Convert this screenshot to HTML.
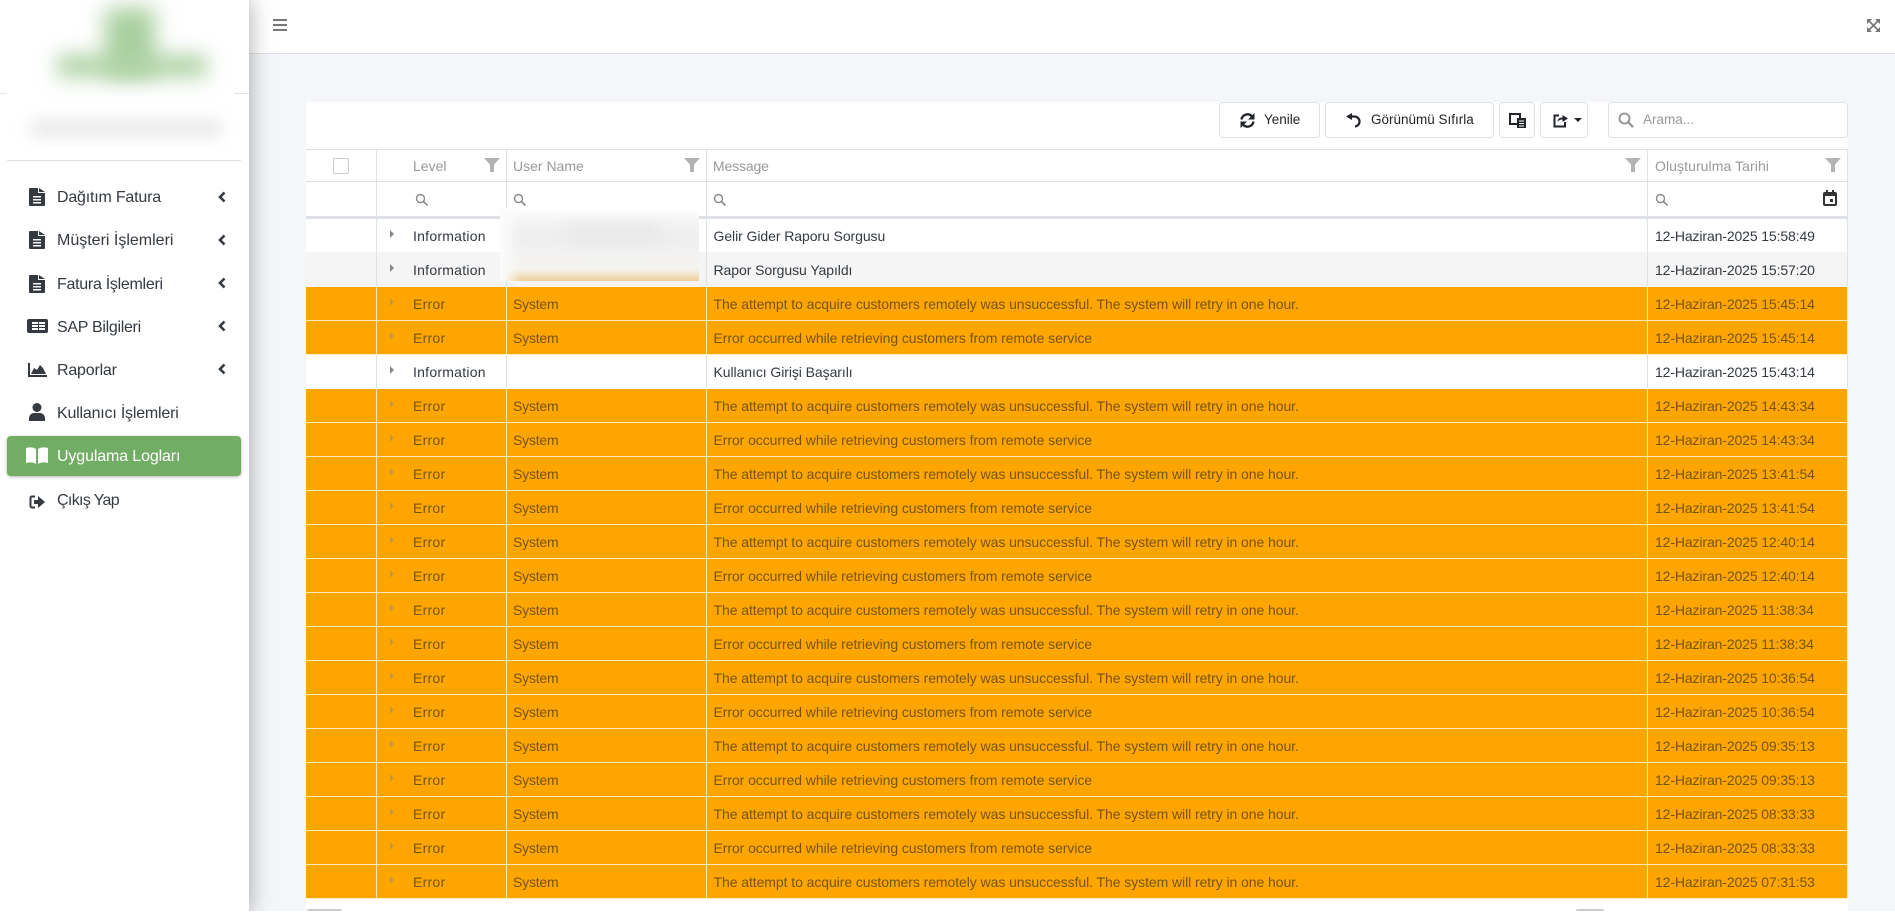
<!DOCTYPE html>
<html lang="tr"><head><meta charset="utf-8"><title>Uygulama Logları</title>
<style>
*{box-sizing:border-box}
html,body{margin:0;padding:0;width:1895px;height:913px;overflow:hidden;background:#fff;font-family:"Liberation Sans",sans-serif;font-size:14px;color:#333}
#bg{position:absolute;left:249px;top:53px;width:1646px;height:858px;background:#f4f6f9}
#top{position:absolute;left:249px;top:0;width:1646px;height:54px;background:#fff;border-bottom:1px solid #dee2e6}
#side{position:absolute;left:0;top:0;width:249px;height:913px;background:#fff;box-shadow:0 0 22px rgba(0,0,0,.35);overflow:hidden}
.m{position:absolute;left:57px;font-size:16px;letter-spacing:-.2px;line-height:22px;color:#343a40;white-space:nowrap}
.i{position:absolute;display:block}
.c{position:absolute;left:218px}
#act{position:absolute;left:7px;top:436px;width:234px;height:40px;background:#72ad65;border-radius:4px;box-shadow:0 1px 3px rgba(0,0,0,.3)}
#panel{position:absolute;left:306px;top:102px;width:1542px;height:809px;background:#fff}
.b{position:absolute;top:102px;height:36px;background:#fff;border:1px solid #dee2e6;border-radius:4px;line-height:34px;font-size:13.5px;color:#212529;white-space:nowrap}
#tbl{position:absolute;left:306px;top:149px;width:1542px}
.h,.f,.r{display:flex;width:1542px;height:34px;position:relative}
.h{height:33px;border-top:1px solid #dee2e6;border-bottom:1px solid #dee2e6;color:#999;line-height:33px;font-size:14px}
.f{height:37px;border-bottom:3px solid #dee2e6}
.r{border-bottom:1px solid #f5f5f5;line-height:34px;color:#343a40;font-size:14px}
.e{background:#ffa500;border-color:#ffe9bd;color:#76550f}
.g{background:#f5f5f5}
.h>div,.f>div,.r>div{border-right:1px solid #dee2e6;position:relative;white-space:nowrap;overflow:hidden;padding-left:6px}
.e>div{border-color:#ffe9bd}
.a{width:71px;padding:0!important}
.l{width:130px;padding-left:36px!important}
.u{width:200px}
.s{width:941px}
.d{width:200px}
.r .l{letter-spacing:.25px}
.r .u{letter-spacing:-.2px}
.r .s{letter-spacing:-.07px;padding-left:6.500px}
.r .d{letter-spacing:-.12px;padding-left:7px}
.h .d{padding-left:7px;letter-spacing:.08px}
.h .s{letter-spacing:-.15px}
.t{position:absolute;left:13px;top:11px;width:0;height:0;border-left:4px solid #888;border-top:4px solid transparent;border-bottom:4px solid transparent}
.e .t{border-left-color:#c5963c}
.fl{position:absolute;right:6px;top:8px}
.q{position:absolute;top:11px}
</style></head><body>
<div id="bg"></div>
<div id="top">
<svg class="i" style="left:24px;top:19px" width="15" height="13"><path d="M0 1h14M0 6h14M0 11h14" stroke="#777" stroke-width="2"/></svg>
<svg class="i" style="left:1617px;top:18px" width="15" height="15" viewBox="0 0 15 15"><path d="M1 1h5L1 6zM14 1v5L9 1zM1 14V9l5 5zM14 14H9l5-5z" fill="#777"/><path d="M3 3l9 9M12 3l-9 9" stroke="#777" stroke-width="1.6"/></svg>
</div>
<div id="side">
<div style="position:absolute;left:0;top:93px;width:249px;height:1px;background:#e4e4e4"></div>
<div style="position:absolute;left:7px;top:0;width:227px;height:146px;background:#fff;overflow:hidden">
<div style="position:absolute;left:98px;top:8px;width:50px;height:68px;background:#a9cf9e;filter:blur(11px)"></div>
<div style="position:absolute;left:50px;top:55px;width:150px;height:22px;background:#aed2a4;filter:blur(10px)"></div>
<div style="position:absolute;left:24px;top:121px;width:190px;height:15px;background:#e6e6e6;filter:blur(8px)"></div>
</div>
<div style="position:absolute;left:7px;top:160px;width:234px;height:1px;background:#dee2e6"></div>
<svg class="i" style="left:29px;top:188px" width="16" height="18" viewBox="0 0 16 18"><path d="M1 0h8v5h7v12a1 1 0 0 1-1 1H1a1 1 0 0 1-1-1V1a1 1 0 0 1 1-1zM10 0l6 4h-6zM4 8v1.500h8V8zM4 11v1.500h8V11zM4 14v1.500h8V14z" fill="#343a40" fill-rule="evenodd"/></svg>
<div class="m" style="top:187px">Dağıtım Fatura</div>
<svg class="c" style="top:191px" width="8" height="12"><path d="M6.500 1.500 2 6l4.500 4.500" fill="none" stroke="#343a40" stroke-width="2.600"/></svg>
<svg class="i" style="left:29px;top:231px" width="16" height="18" viewBox="0 0 16 18"><path d="M1 0h8v5h7v12a1 1 0 0 1-1 1H1a1 1 0 0 1-1-1V1a1 1 0 0 1 1-1zM10 0l6 4h-6zM4 8v1.500h8V8zM4 11v1.500h8V11zM4 14v1.500h8V14z" fill="#343a40" fill-rule="evenodd"/></svg>
<div class="m" style="top:230px;letter-spacing:0">Müşteri İşlemleri</div>
<svg class="c" style="top:234px" width="8" height="12"><path d="M6.500 1.500 2 6l4.500 4.500" fill="none" stroke="#343a40" stroke-width="2.600"/></svg>
<svg class="i" style="left:29px;top:275px" width="16" height="18" viewBox="0 0 16 18"><path d="M1 0h8v5h7v12a1 1 0 0 1-1 1H1a1 1 0 0 1-1-1V1a1 1 0 0 1 1-1zM10 0l6 4h-6zM4 8v1.500h8V8zM4 11v1.500h8V11zM4 14v1.500h8V14z" fill="#343a40" fill-rule="evenodd"/></svg>
<div class="m" style="top:274px;letter-spacing:-.28px">Fatura İşlemleri</div>
<svg class="c" style="top:277px" width="8" height="12"><path d="M6.500 1.500 2 6l4.500 4.500" fill="none" stroke="#343a40" stroke-width="2.600"/></svg>
<svg class="i" style="left:27px;top:319px" width="21" height="14" viewBox="0 0 21 14"><path d="M2 0h17a2 2 0 0 1 2 2v10a2 2 0 0 1-2 2H2a2 2 0 0 1-2-2V2a2 2 0 0 1 2-2zM5 3v2h6V3zM12 3v2h6V3zM5 6v2h6V6zM12 6v2h6V6zM5 9v2h6V9zM12 9v2h6V9z" fill="#343a40" fill-rule="evenodd"/></svg>
<div class="m" style="top:317px;letter-spacing:-.3px">SAP Bilgileri</div>
<svg class="c" style="top:320px" width="8" height="12"><path d="M6.500 1.500 2 6l4.500 4.500" fill="none" stroke="#343a40" stroke-width="2.600"/></svg>
<svg class="i" style="left:28px;top:363px" width="19" height="14" viewBox="0 0 19 14"><path d="M0 0h2v12h17v2H0zM3 11l3-6 3 2 3-5 3 3 3 6z" fill="#343a40"/></svg>
<div class="m" style="top:360px">Raporlar</div>
<svg class="c" style="top:363px" width="8" height="12"><path d="M6.500 1.500 2 6l4.500 4.500" fill="none" stroke="#343a40" stroke-width="2.600"/></svg>
<svg class="i" style="left:29px;top:403px" width="16" height="18" viewBox="0 0 16 18"><circle cx="8" cy="4.500" r="4.500" fill="#343a40"/><path d="M0 18v-3a5 5 0 0 1 5-5h6a5 5 0 0 1 5 5v3z" fill="#343a40"/></svg>
<div class="m" style="top:403px">Kullanıcı İşlemleri</div>
<div id="act"></div>
<svg class="i" style="left:26px;top:447px" width="22" height="17" viewBox="0 0 22 17"><path d="M0 1c4-1 7-1 10 1v15c-3-2-6-2-10-1zM22 1c-4-1-7-1-10 1v15c3-2 6-2 10-1z" fill="#fff"/></svg>
<div class="m" style="top:446px;color:#fff;letter-spacing:-.13px">Uygulama Logları</div>
<svg class="i" style="left:29px;top:495px" width="16" height="14" viewBox="0 0 16 14"><path d="M6 1.500H3A1.500 1.500 0 0 0 1.500 3v8A1.500 1.500 0 0 0 3 12.500h3" fill="none" stroke="#343a40" stroke-width="2"/><path d="M5 5h4V1l7 6-7 6V9H5z" fill="#343a40"/></svg>
<div class="m" style="top:490px;letter-spacing:-.65px">Çıkış Yap</div>
</div>
<div id="panel"></div>
<div class="b" style="left:1219px;width:101px;padding-left:44px">Yenile
<svg class="i" style="left:20px;top:10px" width="15" height="15" viewBox="0 0 15 15"><path d="M1.500 6.500A6 6 0 0 1 12 3.500M13.500 8.500A6 6 0 0 1 3 11.500" fill="none" stroke="#212529" stroke-width="2.400"/><path d="M14.500 0v6.500H8zM.5 15V8.500H7z" fill="#212529"/></svg></div>
<div class="b" style="left:1325px;width:169px;padding-left:45px">Görünümü Sıfırla
<svg class="i" style="left:20px;top:10px" width="15" height="15" viewBox="0 0 15 15"><path d="M4 3.500H8a5 5 0 0 1 1 10" fill="none" stroke="#212529" stroke-width="2.200"/><path d="M0 3.500 6 0v7z" fill="#212529"/></svg></div>
<div class="b" style="left:1499px;width:36px">
<svg class="i" style="left:9px;top:10px" width="17" height="15" viewBox="0 0 17 15"><path d="M1 1h10v10H1z" fill="none" stroke="#212529" stroke-width="2"/><path d="M8 5h9v10H8z" fill="#212529"/><path d="M10 8h5M10 10.500h5M10 13h5" stroke="#fff"/></svg></div>
<div class="b" style="left:1540px;width:48px">
<svg class="i" style="left:12px;top:10px" width="15" height="15" viewBox="0 0 15 15"><path d="M6 2.500H1.500v11H12V9" fill="none" stroke="#212529" stroke-width="2"/><path d="M4.500 9c0-3 2-4.500 5-4.500V2L15 5.500 9.500 9V6.500c-2 0-4 .7-5 2.500z" fill="#212529"/></svg>
<span style="position:absolute;left:33px;top:15px;border-top:4px solid #212529;border-left:4px solid transparent;border-right:4px solid transparent"></span></div>
<div class="b" style="left:1608px;width:240px;padding-left:34px;color:#999">Arama...
<svg class="i" style="left:9px;top:9px" width="16" height="16" viewBox="0 0 16 16"><circle cx="6.500" cy="6.500" r="5" fill="none" stroke="#999" stroke-width="2"/><path d="M10 10l5 5" stroke="#999" stroke-width="2.400"/></svg></div>
<div id="tbl">
<div class="h">
<div class="a"><span style="position:absolute;left:27px;top:8px;width:16px;height:16px;border:1px solid #ccc;border-radius:2px"></span></div>
<div class="l">Level<svg class="fl" width="16" height="14"><path d="M0 0h16l-6 6.500V14H6V6.500z" fill="#b3b3b3"/></svg></div>
<div class="u">User Name<svg class="fl" width="16" height="14"><path d="M0 0h16l-6 6.500V14H6V6.500z" fill="#b3b3b3"/></svg></div>
<div class="s">Message<svg class="fl" width="16" height="14"><path d="M0 0h16l-6 6.500V14H6V6.500z" fill="#b3b3b3"/></svg></div>
<div class="d">Oluşturulma Tarihi<svg class="fl" width="16" height="14"><path d="M0 0h16l-6 6.500V14H6V6.500z" fill="#b3b3b3"/></svg></div>
</div>
<div class="f">
<div class="a"></div>
<div class="l"><svg class="q" style="left:38px" width="13" height="13"><circle cx="5.500" cy="5.500" r="4" fill="none" stroke="#888" stroke-width="1.400"/><path d="M8.500 8.500l4 4" stroke="#888" stroke-width="1.600"/></svg></div>
<div class="u"><svg class="q" style="left:6px" width="13" height="13"><circle cx="5.500" cy="5.500" r="4" fill="none" stroke="#888" stroke-width="1.400"/><path d="M8.500 8.500l4 4" stroke="#888" stroke-width="1.600"/></svg></div>
<div class="s"><svg class="q" style="left:6px" width="13" height="13"><circle cx="5.500" cy="5.500" r="4" fill="none" stroke="#888" stroke-width="1.400"/><path d="M8.500 8.500l4 4" stroke="#888" stroke-width="1.600"/></svg></div>
<div class="d"><svg class="q" style="left:7px" width="13" height="13"><circle cx="5.500" cy="5.500" r="4" fill="none" stroke="#888" stroke-width="1.400"/><path d="M8.500 8.500l4 4" stroke="#888" stroke-width="1.600"/></svg>
<svg class="q" style="left:175px;top:8px" width="14" height="16" viewBox="0 0 14 16"><path d="M3 0h2v2h4V0h2v2h1a2 2 0 0 1 2 2v10a2 2 0 0 1-2 2H2a2 2 0 0 1-2-2V4a2 2 0 0 1 2-2h1zM2 6v8h10V6zM7 9h3v3H7z" fill="#333" fill-rule="evenodd"/></svg></div>
</div>
<div class="r"><div class="a"></div><div class="l"><i class="t"></i>Information</div><div class="u"></div><div class="s">Gelir Gider Raporu Sorgusu</div><div class="d">12-Haziran-2025 15:58:49</div></div>
<div class="r g"><div class="a"></div><div class="l"><i class="t"></i>Information</div><div class="u"></div><div class="s">Rapor Sorgusu Yapıldı</div><div class="d">12-Haziran-2025 15:57:20</div></div>
<div class="r e"><div class="a"></div><div class="l"><i class="t"></i>Error</div><div class="u">System</div><div class="s">The attempt to acquire customers remotely was unsuccessful. The system will retry in one hour.</div><div class="d">12-Haziran-2025 15:45:14</div></div>
<div class="r e"><div class="a"></div><div class="l"><i class="t"></i>Error</div><div class="u">System</div><div class="s">Error occurred while retrieving customers from remote service</div><div class="d">12-Haziran-2025 15:45:14</div></div>
<div class="r"><div class="a"></div><div class="l"><i class="t"></i>Information</div><div class="u"></div><div class="s">Kullanıcı Girişi Başarılı</div><div class="d">12-Haziran-2025 15:43:14</div></div>
<div class="r e"><div class="a"></div><div class="l"><i class="t"></i>Error</div><div class="u">System</div><div class="s">The attempt to acquire customers remotely was unsuccessful. The system will retry in one hour.</div><div class="d">12-Haziran-2025 14:43:34</div></div>
<div class="r e"><div class="a"></div><div class="l"><i class="t"></i>Error</div><div class="u">System</div><div class="s">Error occurred while retrieving customers from remote service</div><div class="d">12-Haziran-2025 14:43:34</div></div>
<div class="r e"><div class="a"></div><div class="l"><i class="t"></i>Error</div><div class="u">System</div><div class="s">The attempt to acquire customers remotely was unsuccessful. The system will retry in one hour.</div><div class="d">12-Haziran-2025 13:41:54</div></div>
<div class="r e"><div class="a"></div><div class="l"><i class="t"></i>Error</div><div class="u">System</div><div class="s">Error occurred while retrieving customers from remote service</div><div class="d">12-Haziran-2025 13:41:54</div></div>
<div class="r e"><div class="a"></div><div class="l"><i class="t"></i>Error</div><div class="u">System</div><div class="s">The attempt to acquire customers remotely was unsuccessful. The system will retry in one hour.</div><div class="d">12-Haziran-2025 12:40:14</div></div>
<div class="r e"><div class="a"></div><div class="l"><i class="t"></i>Error</div><div class="u">System</div><div class="s">Error occurred while retrieving customers from remote service</div><div class="d">12-Haziran-2025 12:40:14</div></div>
<div class="r e"><div class="a"></div><div class="l"><i class="t"></i>Error</div><div class="u">System</div><div class="s">The attempt to acquire customers remotely was unsuccessful. The system will retry in one hour.</div><div class="d">12-Haziran-2025 11:38:34</div></div>
<div class="r e"><div class="a"></div><div class="l"><i class="t"></i>Error</div><div class="u">System</div><div class="s">Error occurred while retrieving customers from remote service</div><div class="d">12-Haziran-2025 11:38:34</div></div>
<div class="r e"><div class="a"></div><div class="l"><i class="t"></i>Error</div><div class="u">System</div><div class="s">The attempt to acquire customers remotely was unsuccessful. The system will retry in one hour.</div><div class="d">12-Haziran-2025 10:36:54</div></div>
<div class="r e"><div class="a"></div><div class="l"><i class="t"></i>Error</div><div class="u">System</div><div class="s">Error occurred while retrieving customers from remote service</div><div class="d">12-Haziran-2025 10:36:54</div></div>
<div class="r e"><div class="a"></div><div class="l"><i class="t"></i>Error</div><div class="u">System</div><div class="s">The attempt to acquire customers remotely was unsuccessful. The system will retry in one hour.</div><div class="d">12-Haziran-2025 09:35:13</div></div>
<div class="r e"><div class="a"></div><div class="l"><i class="t"></i>Error</div><div class="u">System</div><div class="s">Error occurred while retrieving customers from remote service</div><div class="d">12-Haziran-2025 09:35:13</div></div>
<div class="r e"><div class="a"></div><div class="l"><i class="t"></i>Error</div><div class="u">System</div><div class="s">The attempt to acquire customers remotely was unsuccessful. The system will retry in one hour.</div><div class="d">12-Haziran-2025 08:33:33</div></div>
<div class="r e"><div class="a"></div><div class="l"><i class="t"></i>Error</div><div class="u">System</div><div class="s">Error occurred while retrieving customers from remote service</div><div class="d">12-Haziran-2025 08:33:33</div></div>
<div class="r e"><div class="a"></div><div class="l"><i class="t"></i>Error</div><div class="u">System</div><div class="s">The attempt to acquire customers remotely was unsuccessful. The system will retry in one hour.</div><div class="d">12-Haziran-2025 07:31:53</div></div>
</div>
<div style="position:absolute;left:500px;top:208px;width:199px;height:73px;overflow:hidden;background:linear-gradient(#fff 0,#f4f4f4 18%,#eeeeee 40%,#f2f2f2 62%,#f5f3ee 84%,#ecd09a 100%)">
<div style="position:absolute;left:-12px;top:-5px;width:24px;height:90px;background:#fbfbfb;filter:blur(6px)"></div>
<div style="position:absolute;left:70px;top:18px;width:90px;height:14px;background:#e6e6e6;filter:blur(8px)"></div>
</div>
<div style="position:absolute;left:307px;top:909px;width:35px;height:2px;background:#ccc;border-radius:3px 3px 0 0"></div>
<div style="position:absolute;left:1576px;top:909px;width:28px;height:2px;background:#ccc;border-radius:3px 3px 0 0"></div>
<div style="position:absolute;left:249px;top:911px;width:1646px;height:2px;background:#fff"></div>
</body></html>
